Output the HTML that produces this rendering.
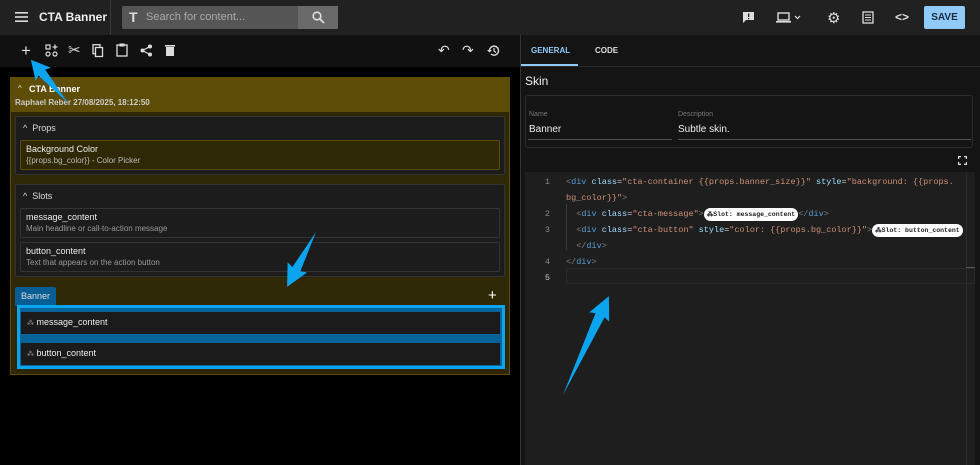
<!DOCTYPE html>
<html><head><meta charset="utf-8"><style>
*{box-sizing:border-box;margin:0;padding:0}
body{width:980px;height:465px;overflow:hidden;background:#000;font-family:"Liberation Sans",sans-serif;color:#eee;position:relative;font-size:11px}
.a{position:absolute}
.mono{font-family:"Liberation Mono",monospace}
.ic{position:absolute;color:#ddd}
</style></head><body>
<!-- top bar -->
<div class="a" style="left:0;top:0;width:980px;height:35px;background:#212121"></div>
<div class="a" style="left:110px;top:0;width:1px;height:35px;background:#3a3a3a"></div>
<svg class="a" style="left:15px;top:11px" width="14" height="12"><rect y="1" width="13" height="1.6" fill="#ddd"/><rect y="5.2" width="13" height="1.6" fill="#ddd"/><rect y="9.4" width="13" height="1.6" fill="#ddd"/></svg>
<div class="a" style="left:39px;top:10px;font-size:12px;font-weight:bold;color:#eee">CTA Banner</div>
<div class="a" style="left:122px;top:6px;width:176px;height:23px;background:#565656;border-radius:2px 0 0 2px"></div>
<div class="a" style="left:298px;top:6px;width:40px;height:23px;background:#6a6a6a"></div>
<div class="a" style="left:129px;top:9px;font-size:14px;font-weight:bold;color:#ddd">T</div>
<div class="a" style="left:146px;top:11px;font-size:11px;color:#aaa">Search for content...</div>
<svg class="a" style="left:312px;top:11px" width="13" height="13"><circle cx="5" cy="5" r="3.8" stroke="#ddd" stroke-width="1.6" fill="none"/><line x1="8" y1="8" x2="12" y2="12" stroke="#ddd" stroke-width="1.8"/></svg>
<!-- right icons -->
<svg class="a" style="left:742px;top:11px" width="13" height="13"><path d="M1 1h11v8H4l-3 3z" fill="#ddd"/><rect x="6" y="2.5" width="1.3" height="3.5" fill="#212121"/><rect x="6" y="7" width="1.3" height="1.2" fill="#212121"/></svg>
<svg class="a" style="left:776px;top:11px" width="26" height="13"><rect x="2" y="2" width="11" height="7" stroke="#ddd" stroke-width="1.4" fill="none"/><rect x="0" y="10" width="15" height="1.6" fill="#ddd"/><path d="M19 5l2.5 2.5L24 5" stroke="#ddd" stroke-width="1.2" fill="none"/></svg>
<div class="ic" style="left:827px;top:9px;font-size:15px">⚙</div>
<svg class="a" style="left:862px;top:11px" width="12" height="13"><rect x="1" y="1" width="10" height="11" stroke="#ddd" stroke-width="1.3" fill="none"/><path d="M3 4h6M3 6.5h6M3 9h6" stroke="#ddd" stroke-width="1"/></svg>
<div class="ic" style="left:895px;top:10px;font-size:12px;font-weight:bold">&lt;&gt;</div>
<div class="a" style="left:924px;top:6px;width:41px;height:23px;background:#90caf9;border-radius:2px;color:#1a2a3a;font-size:10px;font-weight:bold;text-align:center;line-height:23px">SAVE</div>
<!-- toolbar -->
<div class="a" style="left:0;top:35px;width:520px;height:32px;background:#111"></div>
<div class="ic" style="left:21px;top:41px;font-size:17px">+</div>
<svg class="a" style="left:45px;top:44px" width="13" height="13"><rect x="1" y="1" width="4" height="4" stroke="#ddd" fill="none" stroke-width="1.2"/><circle cx="3" cy="10" r="2" stroke="#ddd" fill="none" stroke-width="1.2"/><circle cx="10" cy="10" r="2" stroke="#ddd" fill="none" stroke-width="1.2"/><path d="M10 0.5v5M7.5 3h5" stroke="#ddd" stroke-width="1.2"/></svg>
<div class="ic" style="left:68px;top:41px;font-size:15px">✂</div>
<svg class="a" style="left:92px;top:44px" width="12" height="14"><rect x="1" y="0.7" width="7" height="9" stroke="#ddd" fill="none" stroke-width="1.3"/><rect x="3.5" y="3.5" width="7" height="9" stroke="#ddd" fill="#111" stroke-width="1.3"/></svg>
<svg class="a" style="left:116px;top:43px" width="12" height="14"><rect x="1" y="2" width="10" height="11" stroke="#ddd" fill="none" stroke-width="1.3"/><rect x="3.5" y="0.5" width="5" height="3" fill="#ddd"/></svg>
<svg class="a" style="left:140px;top:44px" width="13" height="13"><circle cx="10" cy="2.5" r="2" fill="#ddd"/><circle cx="2.5" cy="6.5" r="2" fill="#ddd"/><circle cx="10" cy="10.5" r="2" fill="#ddd"/><path d="M10 2.5L2.5 6.5L10 10.5" stroke="#ddd" stroke-width="1.2" fill="none"/></svg>
<svg class="a" style="left:165px;top:44px" width="10" height="13"><rect x="0" y="1" width="10" height="1.6" fill="#ddd"/><rect x="1" y="3" width="8" height="9" fill="#ddd"/></svg>
<div class="ic" style="left:438px;top:42px;font-size:14px">↶</div>
<div class="ic" style="left:462px;top:42px;font-size:14px">↷</div>
<svg class="a" style="left:487px;top:44px" width="13" height="13"><path d="M2.5 6.5A4.5 4.5 0 1 1 4 10" stroke="#ddd" stroke-width="1.4" fill="none"/><path d="M0 6l2.5 2.5L5 6z" fill="#ddd"/><path d="M7 4v3l2 1.5" stroke="#ddd" stroke-width="1.2" fill="none"/></svg>
<!-- banner panel -->
<div class="a" style="left:10px;top:77px;width:500px;height:298px;background:#2f2806;border:1px solid #5a4a0a"></div>
<div class="a" style="left:10px;top:77px;width:500px;height:35px;background:#5e4d07"></div>
<div class="a" style="left:18px;top:84px;font-size:8px;color:#ddd">^</div>
<div class="a" style="left:29px;top:84px;font-size:9px;font-weight:bold;color:#fff">CTA Banner</div>
<div class="a" style="left:15px;top:98px;font-size:8px;font-weight:bold;color:#ccc">Raphael Reber 27/08/2025, 18:12:50</div>
<div class="a" style="left:15px;top:116px;width:490px;height:59px;background:#1c1c1c;border:1px solid #333;border-radius:2px"></div>
<div class="a" style="left:23px;top:123px;font-size:9px;color:#ddd">^&nbsp; Props</div>
<div class="a" style="left:20px;top:140px;width:480px;height:30px;background:#2f2806;border:1px solid #5a4a0a;border-radius:2px"></div>
<div class="a" style="left:26px;top:144px;font-size:9px;color:#eee">Background Color</div>
<div class="a" style="left:26px;top:156px;font-size:8px;color:#bbb">{{props.bg_color}} - Color Picker</div>
<div class="a" style="left:15px;top:184px;width:490px;height:93px;background:#1c1c1c;border:1px solid #333;border-radius:2px"></div>
<div class="a" style="left:23px;top:191px;font-size:9px;color:#ddd">^&nbsp; Slots</div>
<div class="a" style="left:20px;top:208px;width:480px;height:30px;background:#1c1c1c;border:1px solid #333;border-radius:2px"></div>
<div class="a" style="left:26px;top:212px;font-size:9px;color:#eee">message_content</div>
<div class="a" style="left:26px;top:224px;font-size:8px;color:#999">Main headline or call-to-action message</div>
<div class="a" style="left:20px;top:242px;width:480px;height:30px;background:#1c1c1c;border:1px solid #333;border-radius:2px"></div>
<div class="a" style="left:26px;top:246px;font-size:9px;color:#eee">button_content</div>
<div class="a" style="left:26px;top:258px;font-size:8px;color:#999">Text that appears on the action button</div>
<div class="a" style="left:15px;top:287px;width:41px;height:19px;background:#065e94;border-radius:2px 2px 0 0;font-size:9px;color:#ddd;padding:4px 0 0 6px">Banner</div>
<div class="ic" style="left:488px;top:287px;font-size:15px;color:#fff">+</div>
<div class="a" style="left:17px;top:305px;width:488px;height:64px;background:#06649a;border:3px solid #0aa4ef"></div>
<div class="a" style="left:21px;top:312px;width:479px;height:22px;background:#1b1b1b"></div>
<div class="a" style="left:21px;top:343px;width:479px;height:22px;background:#1b1b1b"></div>
<div class="a" style="left:27px;top:317px;font-size:9px;color:#eee"><span style="color:#999;font-size:7px">⁂</span> message_content</div>
<div class="a" style="left:27px;top:348px;font-size:9px;color:#eee"><span style="color:#999;font-size:7px">⁂</span> button_content</div>
<!-- right panel -->
<div class="a" style="left:520px;top:35px;width:460px;height:430px;background:#141414;border-left:1px solid #333"></div>
<div class="a" style="left:531px;top:46px;font-size:8px;font-weight:bold;color:#90caf9">GENERAL</div>
<div class="a" style="left:595px;top:46px;font-size:8px;font-weight:bold;color:#ddd">CODE</div>
<div class="a" style="left:521px;top:64px;width:57px;height:2px;background:#90caf9"></div>
<div class="a" style="left:521px;top:66px;width:459px;height:1px;background:#2a2a2a"></div>
<div class="a" style="left:525px;top:74px;font-size:12px;color:#eee">Skin</div>
<div class="a" style="left:525px;top:95px;width:448px;height:53px;border:1px solid #2c2c2c;border-radius:3px"></div>
<div class="a" style="left:529px;top:111px;font-size:7px;color:#777">Name</div>
<div class="a" style="left:678px;top:111px;font-size:7px;color:#777">Description</div>
<div class="a" style="left:529px;top:124px;font-size:10px;color:#eee">Banner</div>
<div class="a" style="left:678px;top:124px;font-size:10px;color:#eee">Subtle skin.</div>
<div class="a" style="left:528px;top:139px;width:144px;height:1px;background:#555"></div>
<div class="a" style="left:678px;top:139px;width:293px;height:1px;background:#555"></div>
<svg class="a" style="left:958px;top:156px" width="9" height="9"><path d="M0.6 3V0.6H3M6 0.6h2.4V3M8.4 6v2.4H6M3 8.4H0.6V6" stroke="#ddd" stroke-width="1.2" fill="none"/></svg>
<div class="a" style="left:525px;top:172px;width:450px;height:293px;background:#1e1e1e"></div>
<div class="a" style="left:966px;top:172px;width:1px;height:293px;background:#2c2c2c"></div>
<div class="a" style="left:966px;top:267px;width:9px;height:2px;background:#555"></div>
<div class="a" style="left:566px;top:268px;width:409px;height:16px;border:1px solid #2a2a2a"></div>
<div class="a" style="left:566px;top:204px;width:1px;height:46px;background:#3a3a3a"></div>
<div class="a mono" style="left:540px;top:174px;font-size:8.5px;line-height:16px;color:#888;text-align:right;width:10px">1<br><br>2<br>3<br><br>4<br><span style="color:#ccc">5</span></div>
<div class="a mono" style="left:566px;top:174px;font-size:8.5px;line-height:16px;color:#ce9178;white-space:pre"><span style="color:#808080">&lt;</span><span style="color:#569cd6">div</span> <span style="color:#9cdcfe">class</span><span style="color:#ccc">=</span>"cta-container {{props.banner_size}}" <span style="color:#9cdcfe">style</span><span style="color:#ccc">=</span>"background: {{props.
bg_color}}"<span style="color:#808080">&gt;</span>
  <span style="color:#808080">&lt;</span><span style="color:#569cd6">div</span> <span style="color:#9cdcfe">class</span><span style="color:#ccc">=</span>"cta-message"<span style="color:#808080">&gt;</span><span style="display:inline-block;background:#fff;color:#222;border-radius:7px;font-size:6.5px;font-weight:bold;padding:1px 3px;line-height:11px">⁂Slot: message_content</span><span style="color:#808080">&lt;/</span><span style="color:#569cd6">div</span><span style="color:#808080">&gt;</span>
  <span style="color:#808080">&lt;</span><span style="color:#569cd6">div</span> <span style="color:#9cdcfe">class</span><span style="color:#ccc">=</span>"cta-button" <span style="color:#9cdcfe">style</span><span style="color:#ccc">=</span>"color: {{props.bg_color}}"<span style="color:#808080">&gt;</span><span style="display:inline-block;background:#fff;color:#222;border-radius:7px;font-size:6.5px;font-weight:bold;padding:1px 3px;line-height:11px">⁂Slot: button_content</span>
  <span style="color:#808080">&lt;/</span><span style="color:#569cd6">div</span><span style="color:#808080">&gt;</span>
<span style="color:#808080">&lt;/</span><span style="color:#569cd6">div</span><span style="color:#808080">&gt;</span></div>
<!-- arrows -->
<svg class="a" style="left:0;top:0" width="980" height="465">
<g fill="#0aa4ef">
<polygon transform="translate(68,103) rotate(-130.7)" points="0,0 40,-4.5 38,-10 57,0 38,10 40,4.5"/>
<polygon transform="translate(316,232) rotate(117.8)" points="0,0 42,-4.5 40,-11 62,0 40,11 42,4.5"/>
<polygon transform="translate(563,395) rotate(-65.1)" points="0,0 88,-5 86,-11 109,0 86,11 88,5"/>
</g></svg>
</body></html>
